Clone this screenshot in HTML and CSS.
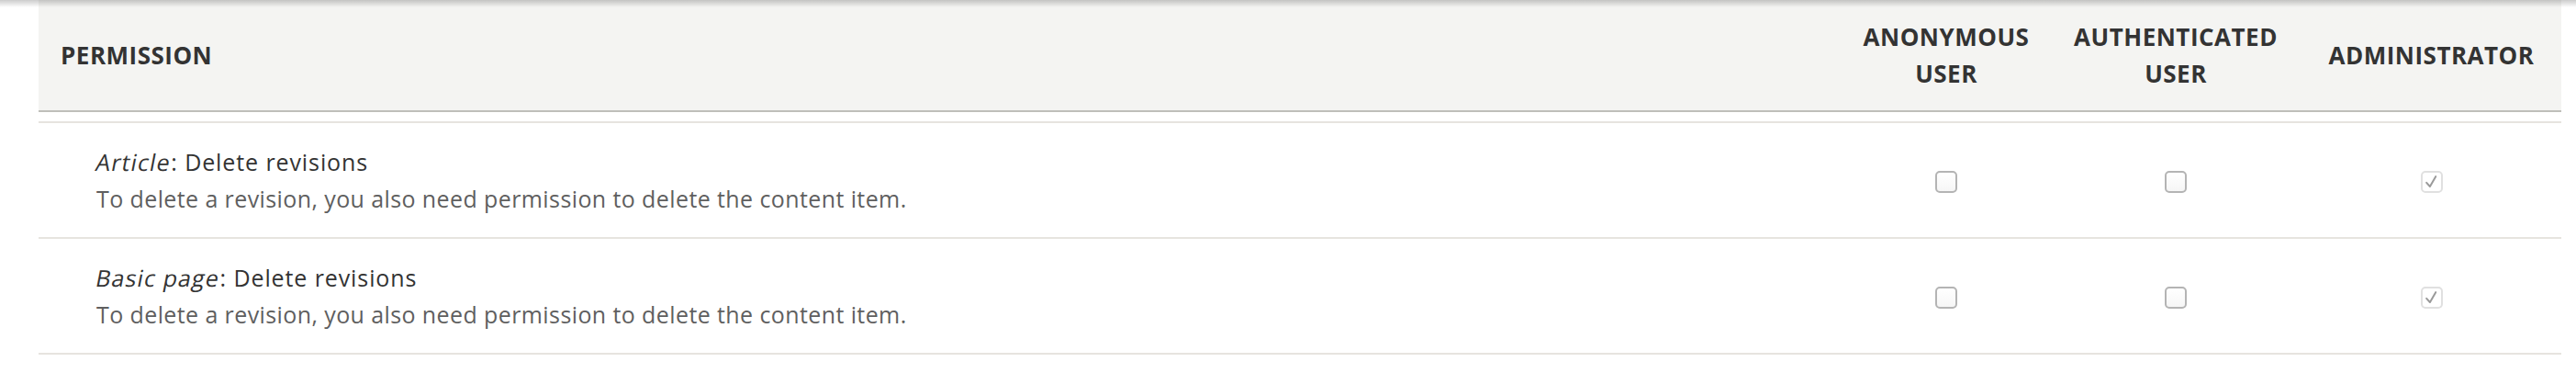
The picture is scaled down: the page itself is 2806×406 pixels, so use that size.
FILE: index.html
```html
<!DOCTYPE html>
<html lang="en">
<head>
<meta charset="utf-8">
<title>Permissions</title>
<link rel="stylesheet" href="styles.css">
</head>
<body>
<div class="top-shadow"></div>
<div class="perm-table">
  <div class="thead">
    <div class="th th-perm">Permission</div>
    <div class="th th-role">Anonymous user</div>
    <div class="th th-role">Authenticated user</div>
    <div class="th th-role">Administrator</div>
  </div>
  <div class="tbody">
    <div class="tr">
      <div class="td td-perm">
        <div class="perm-title"><em>Article</em>: Delete revisions</div>
        <div class="desc">To delete a revision, you also need permission to delete the content item.</div>
      </div>
      <div class="td td-check"><span class="cb"></span></div>
      <div class="td td-check"><span class="cb"></span></div>
      <div class="td td-check"><span class="cb cb-checked"><svg viewBox="0 0 24 24" width="20" height="20"><polyline points="5,13 9.5,18 17,5" fill="none" stroke="#9a9a9a" stroke-width="2.4" stroke-linecap="round" stroke-linejoin="round"/></svg></span></div>
    </div>
    <div class="tr">
      <div class="td td-perm">
        <div class="perm-title"><em>Basic page</em>: Delete revisions</div>
        <div class="desc">To delete a revision, you also need permission to delete the content item.</div>
      </div>
      <div class="td td-check"><span class="cb"></span></div>
      <div class="td td-check"><span class="cb"></span></div>
      <div class="td td-check"><span class="cb cb-checked"><svg viewBox="0 0 24 24" width="20" height="20"><polyline points="5,13 9.5,18 17,5" fill="none" stroke="#9a9a9a" stroke-width="2.4" stroke-linecap="round" stroke-linejoin="round"/></svg></span></div>
    </div>
  </div>
</div>
</body>
</html>
```

FILE: styles.css
```css
html, body {
  margin: 0;
  padding: 0;
  background: #ffffff;
}

body {
  font-family: "Open Sans", "DejaVu Sans", sans-serif;
  font-size: 25px;
  line-height: 40px;
  color: #333333;
}

.top-shadow {
  position: absolute;
  top: 0;
  left: 0;
  right: 0;
  height: 8px;
  background: linear-gradient(to bottom, rgba(0, 0, 0, 0.2), rgba(0, 0, 0, 0));
  pointer-events: none;
  z-index: 5;
}

.perm-table {
  margin: 0 16px 0 42px;
}

.thead,
.tr {
  display: grid;
  grid-template-columns: 1fr 226px 274px 283px;
}

.thead {
  height: 120px;
  background: #f4f4f2;
  border-bottom: 2px solid #bfbfba;
}

.th {
  display: flex;
  align-items: center;
  padding: 0 24px;
  font-size: 26px;
  font-weight: 700;
  letter-spacing: 0.5px;
  text-transform: uppercase;
  color: #333333;
}

.th-role {
  justify-content: center;
  text-align: center;
}

.tbody {
  margin-top: 10px;
  border-top: 2px solid #e6e4df;
}

.tr {
  height: 124px;
  border-bottom: 2px solid #e6e4df;
}

.td {
  display: flex;
  align-items: center;
  padding: 0 24px;
}

.td-perm {
  flex-direction: column;
  align-items: flex-start;
  justify-content: center;
  padding-left: 63px;
}

.perm-title {
  color: #333333;
  letter-spacing: 0.9px;
}

.perm-title em {
  display: inline-block;
  font-style: normal;
  transform: skewX(-11deg);
  letter-spacing: 1.1px;
}

.desc {
  color: #5f5f5f;
  letter-spacing: 0.4px;
}

.td-check {
  justify-content: center;
}

.cb {
  box-sizing: border-box;
  display: flex;
  align-items: center;
  justify-content: center;
  width: 24px;
  height: 24px;
  margin-top: 4px;
  border: 2px solid #b4b4b4;
  border-radius: 5px;
  background: linear-gradient(to bottom, #ffffff, #f6f6f6);
}

.cb-checked {
  border-color: #e0e0e0;
  background: #ffffff;
}
```
